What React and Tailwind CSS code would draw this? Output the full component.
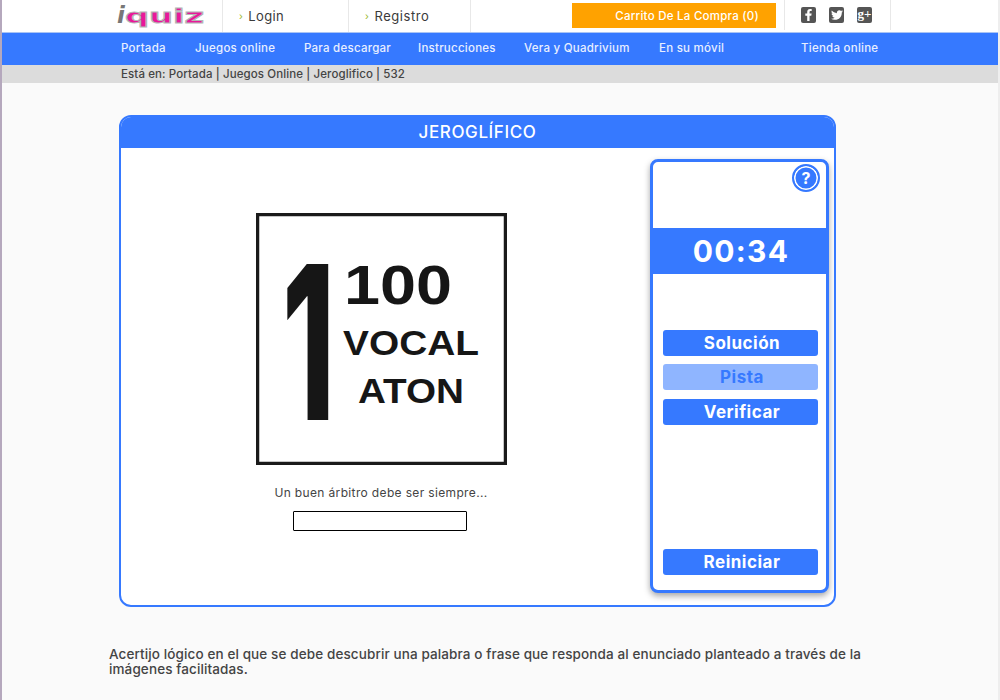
import React from "react";
import { FaFacebookF, FaTwitter } from "react-icons/fa";

const nav = [
  ["Portada", "w-[74px]"],
  ["Juegos online", "w-[109px]"],
  ["Para descargar", "w-[114px]"],
  ["Instrucciones", "w-[106px]"],
  ["Vera y Quadrivium", "w-[135px]"],
  ["En su móvil", "w-[142px]"],
  ["Tienda online", "w-[90px]"],
];

function Btn({ children, className = "" }) {
  return (
    <div className={`h-[26px] w-[155px] ml-[2px] pl-[3px] rounded-[3px] flex items-center justify-center text-[17px] font-bold tracking-[0.5px] leading-none ${className}`}>
      {children}
    </div>
  );
}

function Social({ children }) {
  return (
    <div className="w-[15px] h-[16px] bg-[#555] rounded-[2px] flex items-center justify-center text-white overflow-hidden">
      {children}
    </div>
  );
}

export default function App() {
  return (
    <div className="w-[1000px] h-[700px] overflow-hidden bg-[#fafafa] border-l-2 border-r-2 border-l-[#b5a8bd] border-r-[#eeeeee] text-[#3a3a3a] font-['Inter','Liberation_Sans',sans-serif]">
      {/* top bar */}
      <div className="h-[32px] bg-white flex items-start">
        <div className="w-[220px] h-[32px] pl-[115px] flex items-center whitespace-nowrap pb-[1px]">
          <span className="font-['DejaVu_Sans',sans-serif] font-bold italic text-[23px] leading-none text-[#777]">i</span>
          <span className="inline-block origin-left scale-x-[1.68] font-['DejaVu_Sans',sans-serif] font-bold text-[20px] leading-none text-[#e9189a] [-webkit-text-stroke:1px_#b5b5b5]">quiz</span>
        </div>
        <div className="w-[126px] h-[32px] border-l border-[#e8e8e8] pl-[16px] pt-[1px] flex items-center text-[13px] tracking-[0.4px]">
          <span className="text-[#9ab82c] text-[10px] mr-[5px]">›</span>Login
        </div>
        <div className="w-[122px] h-[32px] border-l border-[#e8e8e8] pl-[16px] pt-[1px] flex items-center text-[13px] tracking-[0.55px]">
          <span className="text-[#9ab82c] text-[10px] mr-[5px]">›</span>Registro
        </div>
        <div className="w-[102px] h-[32px] border-l border-[#e8e8e8]" />
        <div className="w-[204px] h-[25px] mt-[3px] pt-[3px] bg-[#ffa200] text-white text-[11.5px] font-medium tracking-[0.25px] flex items-center justify-end pr-[17px]">
          Carrito De La Compra (0)
        </div>
        <div className="w-[107px] h-[30px] ml-[8px] border-x border-[#e8e8e8] flex items-start pl-[16px] gap-[13px] pt-[7px]">
          <Social><FaFacebookF className="w-[11px] h-[12px]" /></Social>
          <Social><FaTwitter className="w-[12px] h-[12px]" /></Social>
          <Social><span className="font-['Liberation_Serif',serif] font-bold text-[13px] leading-none pb-[3px]">g+</span></Social>
        </div>
      </div>

      {/* nav */}
      <div className="h-[33px] bg-[#3679ff] border-t border-[#a9c4f5] pl-[119px] flex items-center text-[#e8efff] text-[11.5px] font-medium tracking-[0.25px]">
        {nav.map(([t, w]) => (
          <div key={t} className={`${w} whitespace-nowrap`}>{t}</div>
        ))}
      </div>

      {/* breadcrumb */}
      <div className="h-[18px] pt-[1px] bg-[#dcdcdc] pl-[119px] flex items-center text-[11.5px] font-medium tracking-[0.1px] text-[#444]">
        Está en: Portada | Juegos Online | Jeroglifico | 532
      </div>

      {/* card */}
      <div className="ml-[117px] mt-[32px] w-[717px] h-[492px] bg-white border-2 border-[#3679ff] rounded-[12px] overflow-hidden flex flex-col">
        <div className="h-[31px] shrink-0 bg-[#3679ff] text-white text-[17px] font-medium tracking-[0.6px] flex items-center justify-center">
          JEROGLÍFICO
        </div>
        <div className="flex flex-1">
          <div className="w-[520px] shrink-0 flex flex-col items-center pt-[65px]">
            <svg width="251" height="252" viewBox="0 0 251 252" className="block shrink-0 bg-white">
              <rect x="1.5" y="1.5" width="248" height="249" fill="#fff" stroke="#1a1a1a" strokeWidth="3.5" />
              <g fill="#161616" fontFamily="'Liberation Sans',sans-serif" fontWeight="700">
                <text x="26" y="207" fontSize="215" fontFamily="Inter,sans-serif" fontWeight="800" textLength="53" lengthAdjust="spacingAndGlyphs">1</text>
                <text x="88" y="91" fontSize="55" textLength="108" lengthAdjust="spacingAndGlyphs">100</text>
                <text x="87" y="142" fontSize="35" textLength="136" lengthAdjust="spacingAndGlyphs">VOCAL</text>
                <text x="102" y="190" fontSize="35" textLength="106" lengthAdjust="spacingAndGlyphs">ATON</text>
              </g>
            </svg>
            <div className="mt-[20px] text-[12px] leading-[15px] tracking-[0.35px] text-[#444]">Un buen árbitro debe ser siempre...</div>
            <input className="block mt-[11px] ml-[-2px] w-[174px] h-[20px] bg-white border border-black rounded-[1px]" />
          </div>
          <div className="w-[179px] h-[434px] ml-[9px] mt-[11px] relative shrink-0 bg-white border-[3px] border-[#3679ff] rounded-[8px] shadow-[0_3px_6px_rgba(0,0,0,0.35)] flex flex-col items-center overflow-hidden">
            <div className="absolute top-[2px] right-[6px] w-[28px] h-[28px] rounded-full bg-[#3679ff] border-2 border-[#3679ff] shadow-[inset_0_0_0_1.5px_#fff] flex items-center justify-center text-white font-bold text-[16px] leading-none">?</div>
            <div className="mt-[66px] h-[46px] pl-[3px] w-full shrink-0 bg-[#3679ff] text-white text-[30px] font-bold tracking-[1.3px] flex items-center justify-center leading-none">00:34</div>
            <Btn className="mt-[56px] bg-[#3679ff] text-white">Solución</Btn>
            <Btn className="mt-[8px] bg-[#8fb5ff] text-[#3679ff]">Pista</Btn>
            <Btn className="mt-[9px] bg-[#3679ff] text-white">Verificar</Btn>
            <Btn className="mt-[124px] bg-[#3679ff] text-white">Reiniciar</Btn>
          </div>
        </div>
      </div>

      {/* footer text */}
      <p className="ml-[107px] mt-[40px] w-[770px] text-[13.5px] leading-[15px] font-medium tracking-[0.11px] text-[#444]">
        Acertijo lógico en el que se debe descubrir una palabra o frase que responda al enunciado planteado a través de la imágenes facilitadas.
      </p>
    </div>
  );
}
